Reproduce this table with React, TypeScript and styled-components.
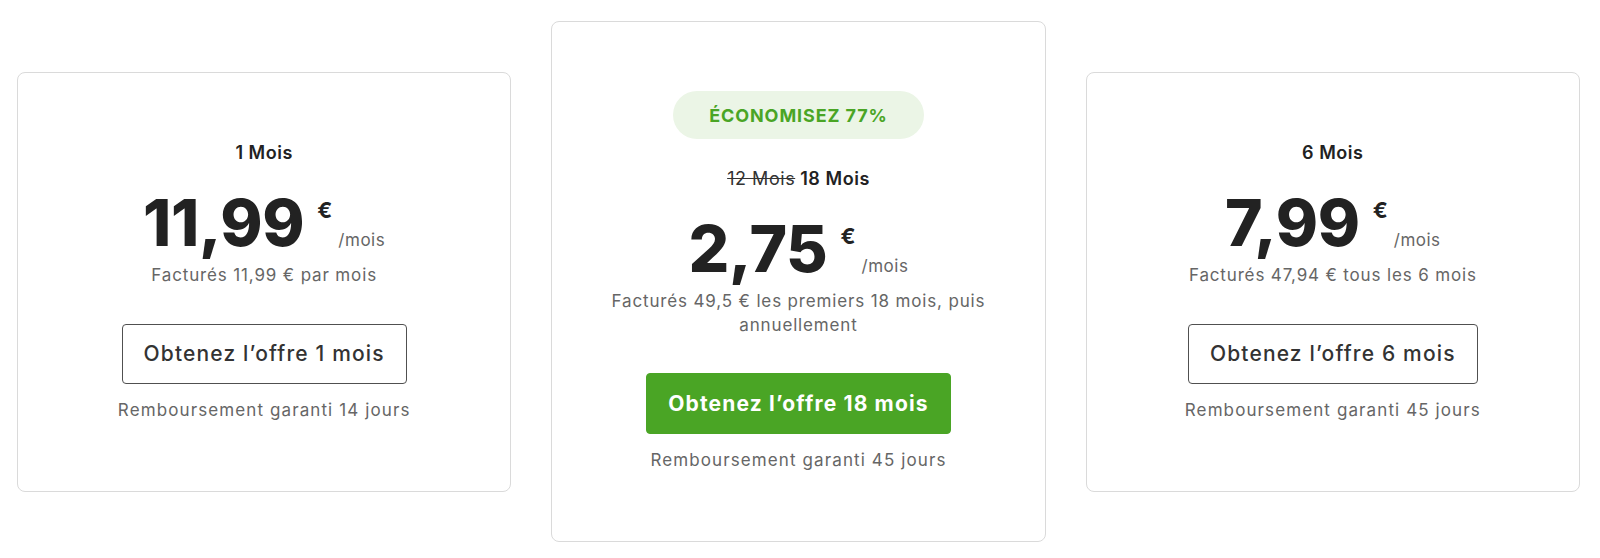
import React from 'react';
import styled, { createGlobalStyle } from 'styled-components';

const GlobalStyle = createGlobalStyle`
  html, body {
    margin: 0;
    padding: 0;
    background: #ffffff;
  }
  body {
    font-family: Inter, "Open Sans", sans-serif;
    color: #222;
  }
`

const Plans = styled.div`
  display: grid;
  grid-template-columns: repeat(3, 1fr);
  align-items: center;
  gap: 40px;
  padding: 21px 20px 0 17px;
`

const Card = styled.div`
  box-sizing: border-box;
  border: 1px solid #dadada;
  border-radius: 8px;
  background: #fff;
  padding: 69px 30px 69px;
  display: flex;
  flex-direction: column;
  align-items: center;
  text-align: center;
`

const Badge = styled.div`
  box-sizing: border-box;
  height: 48px;
  padding: 0 36px;
  border-radius: 24px;
  background: #ebf5e6;
  color: #4aa525;
  font-size: 18px;
  font-weight: 700;
  letter-spacing: 0.05em;
  display: flex;
  align-items: center;
  margin-bottom: 29px;
`

const Duration = styled.div`
  font-size: 18px;
  line-height: 22px;
  font-weight: 600;
  color: #222;
  letter-spacing: 0.03em;
`

const OldDuration = styled.span`
  font-weight: 400;
  color: #333;
  text-decoration: line-through;
  margin-right: 5px;
`

const PriceRow = styled.div`
  display: flex;
  align-items: baseline;
  justify-content: center;
  margin-top: 27px;
`

const Amount = styled.span`
  font-size: 64px;
  line-height: 64px;
  font-weight: 800;
  color: #222;
  letter-spacing: -0.005em;
`

const Currency = styled.span`
  align-self: flex-start;
  margin: 9px 0 0 13px;
  font-size: 22px;
  line-height: 20px;
  font-weight: 700;
  color: #222;
`

const Per = styled.span`
  margin-left: 6px;
  font-size: 17px;
  line-height: 24px;
  color: #666;
  letter-spacing: 0.03em;
`

const Billing = styled.div`
  margin-top: 8px;
  font-size: 17px;
  line-height: 24px;
  color: #666;
  letter-spacing: 0.05em;
  max-width: 385px;
`

const CtaButton = styled.button<{ $primary?: boolean }>`
  margin-top: ${p => (p.$primary ? 36 : 37)}px;
  box-sizing: border-box;
  height: ${p => (p.$primary ? 61 : 60)}px;
  padding: 0 21px;
  border-radius: 4px;
  border: 1px solid ${p => (p.$primary ? '#4aa525' : '#505050')};
  background: ${p => (p.$primary ? '#4aa525' : 'transparent')};
  color: ${p => (p.$primary ? '#fff' : '#333')};
  font-family: Inter, "Open Sans", sans-serif;
  font-size: 21px;
  font-weight: ${p => (p.$primary ? 700 : 500)};
  letter-spacing: 0.055em;
  cursor: pointer;
`

const Guarantee = styled.div`
  margin-top: 14px;
  font-size: 17px;
  line-height: 24px;
  color: #666;
  letter-spacing: 0.065em;
`

interface Plan {
  badge?: string;
  oldDuration?: string;
  duration: string;
  amount: string;
  billing: string;
  cta: string;
  guarantee: string;
  primary?: boolean;
}

const plans: Plan[] = [
  {
    duration: '1 Mois',
    amount: '11,99',
    billing: 'Facturés 11,99 € par mois',
    cta: 'Obtenez l’offre 1 mois',
    guarantee: 'Remboursement garanti 14 jours',
  },
  {
    badge: 'ÉCONOMISEZ 77%',
    oldDuration: '12 Mois',
    duration: '18 Mois',
    amount: '2,75',
    billing: 'Facturés 49,5 € les premiers 18 mois, puis annuellement',
    cta: 'Obtenez l’offre 18 mois',
    guarantee: 'Remboursement garanti 45 jours',
    primary: true,
  },
  {
    duration: '6 Mois',
    amount: '7,99',
    billing: 'Facturés 47,94 € tous les 6 mois',
    cta: 'Obtenez l’offre 6 mois',
    guarantee: 'Remboursement garanti 45 jours',
  },
]

const PlanCard = ({ plan }: { plan: Plan }) => (
  <Card>
    {plan.badge && <Badge>{plan.badge}</Badge>}
    <Duration>
      {plan.oldDuration && <OldDuration>{plan.oldDuration}</OldDuration>}
      {plan.duration}
    </Duration>
    <PriceRow>
      <Amount>{plan.amount}</Amount>
      <Currency>€</Currency>
      <Per>/mois</Per>
    </PriceRow>
    <Billing>{plan.billing}</Billing>
    <CtaButton $primary={plan.primary}>{plan.cta}</CtaButton>
    <Guarantee>{plan.guarantee}</Guarantee>
  </Card>
)

const App = () => (
  <>
    <GlobalStyle />
    <Plans>
      {plans.map(p => (
        <PlanCard key={p.duration} plan={p} />
      ))}
    </Plans>
  </>
)

export default App;
